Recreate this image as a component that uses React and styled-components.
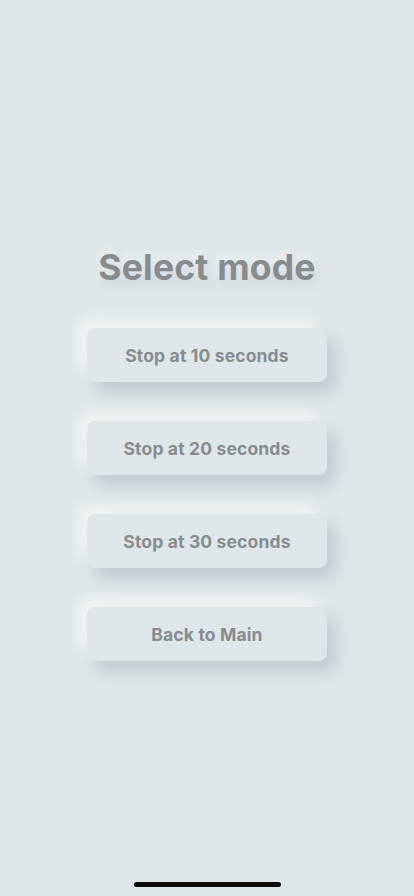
import React from 'react';
import styled, { createGlobalStyle } from 'styled-components';

const GlobalStyle = createGlobalStyle`
	* { box-sizing: border-box; }
	html, body {
		margin: 0;
		padding: 0;
		background: #dee6e9;
	}
	body {
		font-family: Inter, "Noto Sans", "Liberation Sans", sans-serif;
	}
`

const Screen = styled.div`
	width: 100%;
	min-height: 100vh;
	height: 896px;
	background: #dee6e9;
	display: flex;
	flex-direction: column;
	align-items: center;
	padding-top: 246px;
	padding-bottom: 9px;
`

const Title = styled.h1`
	margin: 0;
	font-size: 35.5px;
	line-height: 44px;
	font-weight: 700;
	letter-spacing: 0.2px;
	color: #868b8e;
	text-shadow: 3px 6px 10px rgba(165, 175, 182, 0.3), -3px -4px 10px rgba(255, 255, 255, 0.6);
`

const ModeList = styled.div`
	margin-top: 38px;
	display: flex;
	flex-direction: column;
	gap: 39px;
`

const ModeButton = styled.button`
	width: 240px;
	height: 54px;
	border: none;
	border-radius: 8px;
	background: #dfe6e9;
	color: #878c8f;
	font-family: inherit;
	font-size: 17.5px;
	font-weight: 650;
	letter-spacing: 0.15px;
	box-shadow: 8px 10px 16px rgba(166, 176, 184, 0.55), -8px -8px 16px rgba(255, 255, 255, 0.7);
	cursor: pointer;
`

const HomeIndicator = styled.div`
	margin-top: auto;
	width: 147px;
	height: 5px;
	border-radius: 3px;
	background: #0d0d0d;
`

const modes = [10, 20, 30];

const App = () => {
	return (
		<Screen>
			<GlobalStyle />
			<Title>Select mode</Title>
			<ModeList>
				{modes.map((s) => (
					<ModeButton key={s}>Stop at {s} seconds</ModeButton>
				))}
				<ModeButton>Back to Main</ModeButton>
			</ModeList>
			<HomeIndicator />
		</Screen>
	)
}

export default App;
